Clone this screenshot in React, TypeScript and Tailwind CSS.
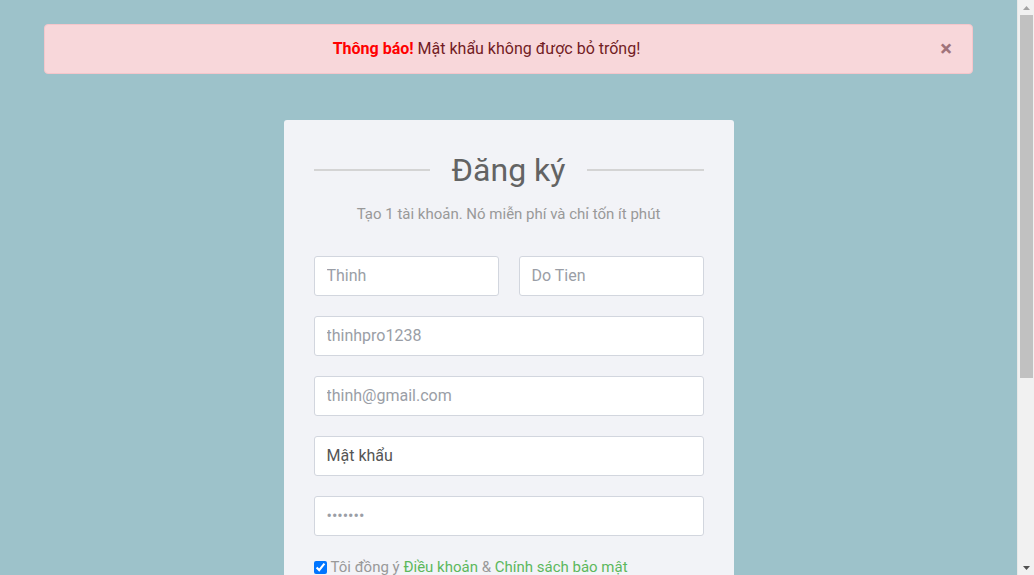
import React from "react";

const fields = [
  { value: "thinhpro1238", dark: false },
  { value: "thinh@gmail.com", dark: false },
  { value: "Mật khẩu", dark: true },
];

function Field({ value, dark }: { value: string; dark: boolean }) {
  return (
    <input
      readOnly
      value={value}
      className={`h-10 w-full rounded-[3px] border border-[#d2d6de] bg-white px-3 pb-[2px] text-[16px] outline-none ${
        dark ? "text-[#555]" : "text-[#9a9ea6]"
      }`}
    />
  );
}

function Scrollbar() {
  return (
    <div className="fixed right-0 top-0 flex h-full w-[17px] flex-col items-center border-l border-[#e8e8e8] bg-[#f1f1f1]">
      <div className="flex h-[15px] w-full items-center justify-center">
        <svg width="7" height="4" viewBox="0 0 7 4">
          <path d="M3.5 0 L7 4 L0 4 Z" fill="#a3a3a3" />
        </svg>
      </div>
      <div className="h-[363px] w-[13px] bg-[#c1c1c1]" />
      <div className="flex-1" />
      <div className="flex h-[15px] w-full items-center justify-center">
        <svg width="7" height="4" viewBox="0 0 7 4">
          <path d="M0 0 L7 0 L3.5 4 Z" fill="#505050" />
        </svg>
      </div>
    </div>
  );
}

export default function App() {
  return (
    <div
      className="min-h-[860px] bg-[#9dc2ca] pr-[17px] pt-6"
      style={{ fontFamily: "Roboto, 'Noto Sans', sans-serif" }}
    >
      {/* Alert */}
      <div className="relative mx-11 flex h-[50px] items-center rounded border border-[#f5c6cb] bg-[#f8d7da] pl-5 pr-16 text-[16px] text-[#721c24]">
        <p className="w-full text-center">
          <strong className="font-bold text-[#ff0000]">Thông báo!</strong> Mật khẩu không được bỏ trống!
        </p>
        <button className="absolute right-5 top-1/2 -translate-y-1/2 text-[22px] font-bold leading-none text-[#a0737a]">
          ×
        </button>
      </div>

      {/* Card */}
      <div className="mx-auto mt-[46px] w-[450px] rounded-[3px] bg-[#f2f3f7] px-[30px] pb-10 pt-[30px]">
        <div className="flex items-center gap-[22px]">
          <div className="h-[2px] flex-1 bg-[#d4d4d4]" />
          <h2 className="text-[32px] leading-10 text-[#636363]">Đăng ký</h2>
          <div className="h-[2px] flex-1 bg-[#d4d4d4]" />
        </div>
        <p className="mt-[14px] text-center text-[15px] leading-5 text-[#999]">
          Tạo 1 tài khoản. Nó miễn phí và chỉ tốn ít phút
        </p>

        <div className="mt-8 flex flex-col gap-5">
          <div className="grid grid-cols-2 gap-5">
            <Field value="Thinh" dark={false} />
            <Field value="Do Tien" dark={false} />
          </div>
          {fields.map((f) => (
            <Field key={f.value} value={f.value} dark={f.dark} />
          ))}
          <input
            readOnly
            type="password"
            value="1234567"
            className="h-10 w-full rounded-[3px] border border-[#d2d6de] bg-white px-3 pb-[2px] text-[16px] text-[#9a9ea6] outline-none"
          />
        </div>

        <label className="mt-5 flex items-center gap-1 text-[15px] text-[#999]">
          <input type="checkbox" defaultChecked className="h-[13px] w-[13px]" />
          <span>
            Tôi đồng ý <a className="text-[#5cb85c]">Điều khoản</a> &amp;{" "}
            <a className="text-[#5cb85c]">Chính sách bảo mật</a>
          </span>
        </label>
      </div>

      <Scrollbar />
    </div>
  );
}
